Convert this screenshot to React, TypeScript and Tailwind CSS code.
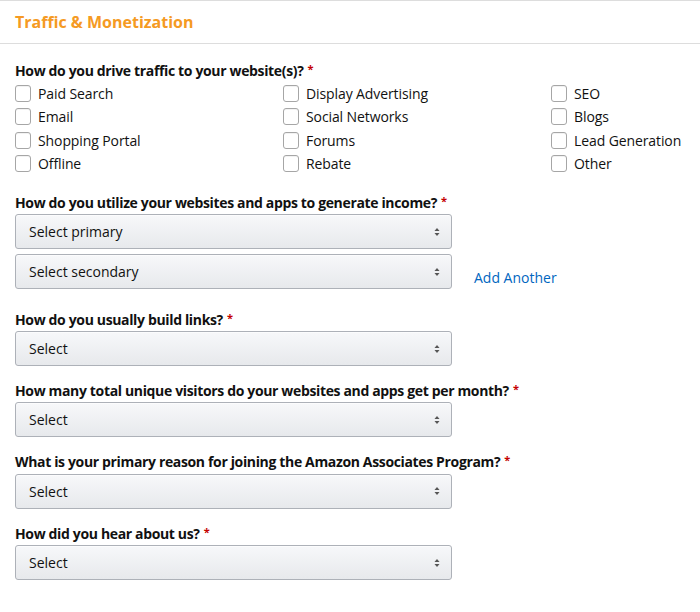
import React from "react";

const font = { fontFamily: '"Open Sans", "Noto Sans", Arial, sans-serif' };

function Req() {
  return <span className="ml-[4px] text-[11px] text-[#c40000] relative top-[-3px]">*</span>;
}

function Label({ children }: { children: React.ReactNode }) {
  return (
    <div className="h-[19px] leading-[19px] text-[14px] font-bold tracking-[-0.35px] text-[#111] mb-[2.5px] whitespace-nowrap">
      {children}
      <Req />
    </div>
  );
}

function Arrows() {
  return (
    <svg width="6" height="10" viewBox="0 0 6 10" className="block">
      <path d="M0.5 4 L3 1 L5.5 4 Z" fill="#555" />
      <path d="M0.5 6 L3 9 L5.5 6 Z" fill="#555" />
    </svg>
  );
}

function Select({ text }: { text: string }) {
  return (
    <div className="w-[437px] h-[35px] flex items-center justify-between pl-[13px] pr-[11px] rounded-[3px] border border-[#adb1b8] bg-gradient-to-b from-[#f7f8fa] to-[#e7e9ec] shadow-[0_1px_0_rgba(255,255,255,0.6)_inset] text-[14px] text-[#111]">
      <span>{text}</span>
      <Arrows />
    </div>
  );
}

function Check({ label }: { label: string }) {
  return (
    <div className="h-[23.5px] flex items-center">
      <div className="w-[16px] h-[17px] rounded-[3px] border border-[#a6a6a6] bg-white shadow-[0_1px_0_rgba(0,0,0,0.05)_inset] shrink-0" />
      <span className="ml-[7px] text-[14px] tracking-[-0.1px] text-[#111] whitespace-nowrap">{label}</span>
    </div>
  );
}

export default function App() {
  const cols = [
    ["Paid Search", "Email", "Shopping Portal", "Offline"],
    ["Display Advertising", "Social Networks", "Forums", "Rebate"],
    ["SEO", "Blogs", "Lead Generation", "Other"],
  ];
  return (
    <div className="w-[700px] h-[612px] bg-white overflow-hidden" style={font}>
      <div className="border-t border-[#dddddd] h-[43px] flex items-center px-[15px]">
        <span className="text-[16px] font-bold text-[#f59a23]">Traffic &amp; Monetization</span>
      </div>
      <div className="border-t border-[#dddddd] px-[15px] pt-[16.5px]">
        <Label>How do you drive traffic to your website(s)?</Label>
        <div className="grid grid-cols-[268px_268px_1fr] mt-[-0.5px]">
          {cols.map((c, i) => (
            <div key={i} className="flex flex-col">
              {c.map((l) => (
                <Check key={l} label={l} />
              ))}
            </div>
          ))}
        </div>

        <div className="mt-[17px]">
          <Label>How do you utilize your websites and apps to generate income?</Label>
          <Select text="Select primary" />
          <div className="flex items-end mt-[5px]">
            <Select text="Select secondary" />
            <a className="ml-[22px] mb-[2px] text-[14px] text-[#0066c0] leading-[19px]">Add Another</a>
          </div>
        </div>

        <div className="mt-[20.5px]">
          <Label>How do you usually build links?</Label>
          <Select text="Select" />
        </div>

        <div className="mt-[14.5px]">
          <Label>How many total unique visitors do your websites and apps get per month?</Label>
          <Select text="Select" />
        </div>

        <div className="mt-[15px]">
          <Label>What is your primary reason for joining the Amazon Associates Program?</Label>
          <Select text="Select" />
        </div>

        <div className="mt-[15px]">
          <Label>How did you hear about us?</Label>
          <Select text="Select" />
        </div>
      </div>
    </div>
  );
}
